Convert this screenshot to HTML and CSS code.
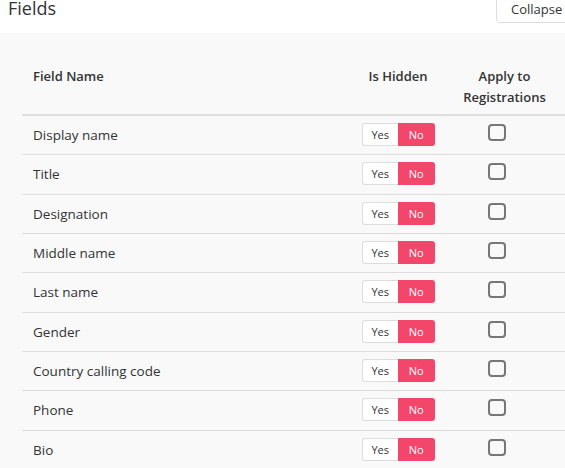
FILE: index.html
```html
<!DOCTYPE html>
<html>
<head>
<meta charset="utf-8">
<link rel="stylesheet" href="styles.css">
</head>
<body>
<div class="page">
  <div class="topbar">
    <h2 class="title">Fields</h2>
    <button class="collapse-btn">Collapse</button>
  </div>
  <div class="panel">
    <div class="table">
      <div class="row head">
        <div class="c-name">Field Name</div>
        <div class="c-hidden">Is Hidden</div>
        <div class="c-apply">Apply to<br>Registrations</div>
      </div>
      <div class="row"><div class="c-name">Display name</div><div class="c-hidden"><span class="toggle"><span class="yes">Yes</span><span class="no">No</span></span></div><div class="c-apply"><span class="check"></span></div></div>
      <div class="row"><div class="c-name">Title</div><div class="c-hidden"><span class="toggle"><span class="yes">Yes</span><span class="no">No</span></span></div><div class="c-apply"><span class="check"></span></div></div>
      <div class="row"><div class="c-name">Designation</div><div class="c-hidden"><span class="toggle"><span class="yes">Yes</span><span class="no">No</span></span></div><div class="c-apply"><span class="check"></span></div></div>
      <div class="row"><div class="c-name">Middle name</div><div class="c-hidden"><span class="toggle"><span class="yes">Yes</span><span class="no">No</span></span></div><div class="c-apply"><span class="check"></span></div></div>
      <div class="row"><div class="c-name">Last name</div><div class="c-hidden"><span class="toggle"><span class="yes">Yes</span><span class="no">No</span></span></div><div class="c-apply"><span class="check"></span></div></div>
      <div class="row"><div class="c-name">Gender</div><div class="c-hidden"><span class="toggle"><span class="yes">Yes</span><span class="no">No</span></span></div><div class="c-apply"><span class="check"></span></div></div>
      <div class="row"><div class="c-name">Country calling code</div><div class="c-hidden"><span class="toggle"><span class="yes">Yes</span><span class="no">No</span></span></div><div class="c-apply"><span class="check"></span></div></div>
      <div class="row"><div class="c-name">Phone</div><div class="c-hidden"><span class="toggle"><span class="yes">Yes</span><span class="no">No</span></span></div><div class="c-apply"><span class="check"></span></div></div>
      <div class="row"><div class="c-name">Bio</div><div class="c-hidden"><span class="toggle"><span class="yes">Yes</span><span class="no">No</span></span></div><div class="c-apply"><span class="check"></span></div></div>
    </div>
  </div>
</div>
</body>
</html>
```
FILE: styles.css
```css
* { box-sizing: border-box; }
html, body { margin: 0; padding: 0; background: #fff; overflow: hidden; }
body { font-family: "Open Sans", "Noto Sans", sans-serif; color: #333; }
.page { width: 565px; height: 468px; overflow: hidden; }
.topbar {
  display: flex;
  justify-content: space-between;
  align-items: flex-start;
  height: 33px;
}
.title {
  margin: 0 0 0 8px;
  font-size: 18px;
  font-weight: 400;
  line-height: 16px;
  color: #333;
}
.collapse-btn {
  font-family: inherit;
  font-size: 13px;
  color: #333;
  background: #fff;
  border: 1px solid #ddd;
  border-radius: 4px;
  height: 34px;
  margin-top: -11px;
  width: 80px;
  margin-right: -11px;
  text-align: left;
  padding: 4px 0 0 14px;
  line-height: 30px;
  flex-shrink: 0;
}
.panel {
  background: #f9f9f9;
  padding: 27px 0 0 22px;
  height: 435px;
}
.table { width: 560px; }
.row {
  display: grid;
  grid-template-columns: 323px 106px 131px;
  align-items: center;
  height: 39.33px;
  border-bottom: 1px solid #ddd;
  font-size: 13.5px;
}
.row.head {
  height: 56px;
  border-bottom: 2px solid #ddd;
  font-weight: 600;
  font-size: 13px;
  align-items: start;
  line-height: 21px;
  padding-top: 6px;
}
.c-name { padding-left: 11px; }
.c-hidden { text-align: center; }
.c-apply { text-align: center; padding-right: 39px; }
.head .c-apply { padding-right: 0; padding-left: 0; margin-left: -24px; }
.toggle {
  display: inline-flex;
  height: 23px;
  font-size: 11px;
  vertical-align: middle;
  margin-top: -1px;
}
.yes, .no {
  width: 36.5px;
  display: flex;
  align-items: center;
  justify-content: center;
}
.yes {
  background: #fff;
  border: 1px solid #ddd;
  border-right: none;
  border-radius: 3px 0 0 3px;
  color: #333;
}
.no {
  background: #f2466b;
  color: #fff;
  border-radius: 0 3px 3px 0;
}
.check {
  display: inline-block;
  width: 18px;
  height: 17px;
  border: 2px solid #777;
  border-radius: 4px;
  vertical-align: middle;
  margin-top: -8px;
}
```
